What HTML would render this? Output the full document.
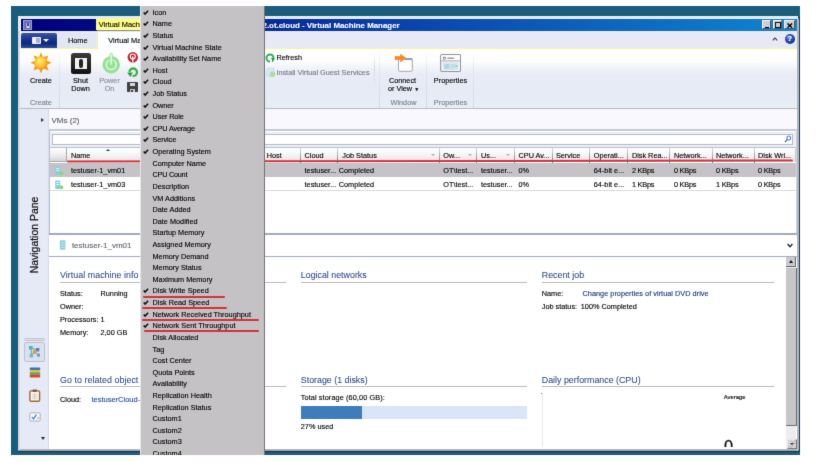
<!DOCTYPE html>
<html lang="en"><head><meta charset="utf-8"><title>Virtual Machine Manager</title>
<style>
html,body{margin:0;padding:0;background:#fff;}
body{width:820px;height:463px;position:relative;overflow:hidden;font-family:"Liberation Sans",sans-serif;font-size:7.3px;color:#000;}
.a{position:absolute;}
.t{position:absolute;white-space:nowrap;line-height:10px;-webkit-text-stroke:0.12px;}
</style></head><body>
<svg width="0" height="0" style="position:absolute"><filter id="soft" x="0" y="0" width="100%" height="100%" color-interpolation-filters="sRGB"><feConvolveMatrix order="3 3" kernelMatrix="0.0081 0.0819 0.0081 0.0819 0.64 0.0819 0.0081 0.0819 0.0081" divisor="1" preserveAlpha="false" edgeMode="duplicate"/></filter></svg>
<div id="app" style="position:absolute;left:0;top:0;width:820px;height:463px;background:#fff;filter:url(#soft);">
<div class="a" style="left:11px;top:6px;width:789px;height:449px;background:#1a5c7b;"></div>
<div class="a" style="left:18px;top:16px;width:780px;height:435px;background:#e9eaef;"></div>
<div class="a" style="left:798.6px;top:16px;width:1.4px;height:436px;background:#1a3a52;"></div>
<div class="a" style="left:796.6px;top:19px;width:2px;height:431px;background:#b4b7bc;"></div>
<div class="a" style="left:20px;top:19px;width:777px;height:431px;background:#fff;"></div>
<div class="a" style="left:20.6px;top:19px;width:776px;height:12px;background:linear-gradient(90deg,#00007c 0%,#01087f 8%,#0a44ac 50%,#1084d0 100%);"></div>
<div class="a" style="left:22.6px;top:20.2px;width:9.8px;height:9.8px;background:#6a70b0;border:0.6px solid #9a9fd4;box-sizing:border-box;"><div class="a" style="left:2.3px;top:1.6px;width:4.2px;height:5.6px;background:#4a4f98;border:0.7px solid #a8acd8;border-top:none;border-radius:0 0 1.6px 1.6px;box-sizing:border-box;"></div><div class="a" style="left:3.6px;top:5px;width:1.6px;height:1.4px;background:#d8daf0;"></div></div>
<div class="a" style="left:95.8px;top:19px;width:110px;height:11.4px;background:linear-gradient(180deg,#fefe70 0%,#fefe80 50%,#fefeb0 100%);"></div>
<div class="a" style="left:96.5px;top:30.2px;width:110px;height:1.8px;background:#92924e;"></div>
<div class="a" style="left:97px;top:32px;width:110px;height:1.3px;background:#f6f6c4;"></div>
<div class="t" style="left:98.7px;top:20px;font-size:7.45px;color:#000;">Virtual Machine</div>
<div class="t" style="right:420.4px;top:21px;font-size:7.9px;color:#fff;font-weight:700;">2.ot.cloud - Virtual Machine Manager</div>
<div class="a" style="left:762px;top:20.4px;width:9.2px;height:8.9px;background:#d0d0d3;border-right:1px solid #55585e;border-bottom:1px solid #55585e;border-top:0.6px solid #f4f4f4;border-left:0.6px solid #f4f4f4;box-sizing:border-box;"><div class="a" style="left:2.2px;top:5.2px;width:4.2px;height:1.7px;background:#000;"></div></div>
<div class="a" style="left:772.8px;top:20.4px;width:9.2px;height:8.9px;background:#d0d0d3;border-right:1px solid #55585e;border-bottom:1px solid #55585e;border-top:0.6px solid #f4f4f4;border-left:0.6px solid #f4f4f4;box-sizing:border-box;"><div class="a" style="left:1.4px;top:0.8px;width:6px;height:6px;border:0.9px solid #111;border-top-width:1.7px;box-sizing:border-box;"></div></div>
<div class="a" style="left:784.2px;top:20.4px;width:10.5px;height:8.9px;background:#d0d0d3;border-right:1px solid #55585e;border-bottom:1px solid #55585e;border-top:0.6px solid #f4f4f4;border-left:0.6px solid #f4f4f4;box-sizing:border-box;"><svg class="a" style="left:2.3px;top:1.5px" width="5.6" height="5.2" viewBox="0 0 5.6 5.2"><path d="M0.5 0.5L5.1 4.7M5.1 0.5L0.5 4.7" stroke="#000" stroke-width="1.45"/></svg></div>
<div class="a" style="left:20px;top:31px;width:777px;height:17px;background:#e7eaf6;"></div>
<div class="a" style="left:20.6px;top:33.1px;width:36.9px;height:14.5px;background:linear-gradient(180deg,#3a55a4 0%,#16338a 45%,#0c2a80 70%,#2c4ca2 100%);border-radius:2px 2px 0 0;"><div class="a" style="left:11.3px;top:3.8px;width:9.4px;height:7.2px;background:#eef1fa;border-radius:1px;"></div><div class="a" style="left:15.2px;top:4.8px;width:4.2px;height:5.2px;background:#a8b2d0;"></div><div class="a" style="left:22.8px;top:5.9px;width:0;height:0;border-left:3.1px solid transparent;border-right:3.1px solid transparent;border-top:3.5px solid #fff;"></div></div>
<div class="a" style="left:57.5px;top:33px;width:38.5px;height:15px;background:#e3e7f4;"></div>
<div class="t" style="left:67.9px;top:36px;font-size:7.4px;color:#000;">Home</div>
<div class="a" style="left:96.6px;top:32px;width:110px;height:17px;background:#fdfeff;border-left:1px solid #f3f1a0;box-sizing:border-box;"></div>
<div class="t" style="left:108.2px;top:36px;font-size:7.4px;color:#000;">Virtual Machine</div>
<div class="a" style="left:20px;top:47.5px;width:77px;height:1.6px;background:#f7f594;"></div>
<div class="a" style="left:206px;top:47.5px;width:590.5px;height:1.6px;background:#f7f594;"></div>
<svg class="a" style="left:771.8px;top:37.3px" width="6" height="4" viewBox="0 0 6 4"><path d="M0.8 3.4L3 1L5.2 3.4" fill="none" stroke="#333" stroke-width="1.1"/></svg>
<div class="a" style="left:784.6px;top:33.9px;width:10.1px;height:10.1px;border-radius:50%;background:radial-gradient(circle at 40% 35%,#5b7fd6 0%,#1a3a9c 60%,#0c2470 100%);"></div>
<div class="t" style="left:784.6px;top:34px;font-size:8px;color:#fff;font-weight:700;width:10px;text-align:center;">?</div>
<div class="a" style="left:20px;top:48.5px;width:777px;height:60px;background:linear-gradient(180deg,#ffffff 0%,#fdfdff 20%,#f2f4fa 31%,#e9ecf6 42%,#e6eaf5 70%,#e8eef6 100%);"></div>
<div class="a" style="left:20px;top:107.9px;width:777px;height:2.2px;background:linear-gradient(180deg,#b3b7c1,#c3c7d0);"></div>
<div class="a" style="left:58.8px;top:51px;width:1px;height:57px;background:linear-gradient(180deg,rgba(200,205,220,0) 0%,#e2e5ee 35%,#d3d7e1 100%);"></div>
<div class="a" style="left:378.5px;top:51px;width:1px;height:57px;background:linear-gradient(180deg,rgba(200,205,220,0) 0%,#e2e5ee 35%,#d3d7e1 100%);"></div>
<div class="a" style="left:425.5px;top:51px;width:1px;height:57px;background:linear-gradient(180deg,rgba(200,205,220,0) 0%,#e2e5ee 35%,#d3d7e1 100%);"></div>
<div class="a" style="left:472.8px;top:51px;width:1px;height:57px;background:linear-gradient(180deg,rgba(200,205,220,0) 0%,#e2e5ee 35%,#d3d7e1 100%);"></div>
<div class="a" style="left:373.5px;top:52px;width:1px;height:36px;background:linear-gradient(180deg,rgba(210,214,226,0) 0%,#d6d9e6 50%,rgba(210,214,226,0) 100%);"></div>
<svg class="a" style="left:29.6px;top:52px" width="22" height="22" viewBox="0 0 22 22">
<defs><radialGradient id="sun" cx="42%" cy="38%" r="62%"><stop offset="0" stop-color="#fff07a"/><stop offset="0.45" stop-color="#ffd23a"/><stop offset="0.8" stop-color="#fbae22"/><stop offset="1" stop-color="#f3901a"/></radialGradient></defs>
<polygon points="11,0.2 13,5.2 18.3,3.4 16.6,8.6 21.6,10.8 16.7,13 18.5,18.4 13.1,16.6 11,21.6 8.9,16.6 3.5,18.4 5.3,13 0.4,10.8 5.4,8.6 3.7,3.4 9,5.2" fill="#f59a1c"/>
<circle cx="11" cy="10.9" r="6.6" fill="url(#sun)"/></svg>
<div class="t" style="left:30px;top:76px;color:#000;">Create</div>
<div class="t" style="left:30px;top:98px;color:#7c808a;">Create</div>
<div class="a" style="left:70.5px;top:53px;width:20.5px;height:20.5px;background:linear-gradient(180deg,#3a3a3a,#111);border-radius:2.5px;"><div class="a" style="left:4.5px;top:4.5px;width:11.5px;height:11.5px;background:#f4f4f4;"></div><div class="a" style="left:8.3px;top:6px;width:4px;height:8.5px;background:#222;border-radius:2px;"></div></div>
<div class="t" style="left:60px;top:76px;color:#000;width:41px;text-align:center;">Shut</div>
<div class="t" style="left:60px;top:84px;color:#000;width:41px;text-align:center;">Down</div>
<svg class="a" style="left:100.5px;top:52px" width="21" height="23" viewBox="0 0 21 23">
<circle cx="10.2" cy="12.7" r="8.7" fill="#93e093"/><circle cx="10.2" cy="12.7" r="4.9" fill="none" stroke="#d9f7d9" stroke-width="1.7"/>
<rect x="8.9" y="1.2" width="2.6" height="12.3" rx="1.3" fill="#b9efb9" stroke="#93e093" stroke-width="0.7"/><rect x="9.6" y="2" width="1.2" height="10.5" rx="0.6" fill="#e6fbe6"/></svg>
<div class="t" style="left:89px;top:76px;color:#878c96;width:41px;text-align:center;">Power</div>
<div class="t" style="left:89px;top:84px;color:#878c96;width:41px;text-align:center;">On</div>
<svg class="a" style="left:127.3px;top:52.2px" width="12" height="11" viewBox="0 0 12 11"><circle cx="5.8" cy="5.3" r="5.2" fill="#c02630"/><circle cx="5.8" cy="4.5" r="2.5" fill="none" stroke="#fff" stroke-width="1.15"/><rect x="5.15" y="4.4" width="1.3" height="5.4" fill="#fff"/></svg>
<svg class="a" style="left:127.3px;top:67.3px" width="12" height="11" viewBox="0 0 12 11"><circle cx="6.2" cy="5.2" r="3.7" fill="#f2fbf2" stroke="#35b048" stroke-width="2.3"/><rect x="0" y="5.2" width="5.6" height="5.8" fill="#eef1f8"/><path d="M0.2 5.6L5.8 5.4L3.4 10.2Z" fill="#27a03c"/></svg>
<div class="a" style="left:127.4px;top:82.3px;width:10.2px;height:10px;background:#414141;border-radius:0.8px;"><div class="a" style="left:2.3px;top:0.6px;width:5.6px;height:3.6px;background:#dcdcdc;"></div><div class="a" style="left:3px;top:6.6px;width:4.2px;height:3.4px;background:#c4c4c4;"></div><div class="a" style="left:4px;top:7.3px;width:1.3px;height:2.2px;background:#444;"></div></div>
<svg class="a" style="left:265.2px;top:53.3px" width="10" height="10" viewBox="0 0 10 10"><circle cx="5" cy="5" r="3.5" fill="none" stroke="#2fae49" stroke-width="1.9"/><path d="M5.4 5.2L9.8 5.2L7.6 8.8Z" fill="#1e9a3a"/><rect x="5" y="6" width="2" height="4" fill="#f8f9fc"/></svg>
<div class="t" style="left:276.4px;top:53px;color:#000;">Refresh</div>
<svg class="a" style="left:265.5px;top:67px" width="10" height="11" viewBox="0 0 10 11"><rect x="1" y="1" width="7" height="8" rx="1" fill="#d9e9f0" stroke="#b8d4e0" stroke-width="0.6"/><circle cx="6.5" cy="7.3" r="2.8" fill="#a6e0a6"/></svg>
<div class="t" style="left:276.4px;top:68px;color:#757a86;">Install Virtual Guest Services</div>
<svg class="a" style="left:393px;top:52px" width="22" height="22" viewBox="0 0 22 22">
<rect x="5.5" y="6.7" width="13.8" height="12.6" rx="1" fill="#fdfdfd" stroke="#9c9ea4" stroke-width="0.9"/>
<rect x="11.5" y="6.5" width="7.6" height="1.3" fill="#7e848c"/>
<path d="M2 4.5L7.5 4.5L7.5 2.2L12.8 6L7.5 9.9L7.5 7.6L2 7.6Z" fill="#f68b1f" stroke="#e57a12" stroke-width="0.5"/></svg>
<div class="t" style="left:380px;top:76px;color:#000;width:45px;text-align:center;">Connect</div>
<div class="t" style="left:380px;top:84px;color:#000;width:47px;text-align:center;">or View <span style="font-size:5px;position:relative;top:-0.5px">&#9660;</span></div>
<div class="t" style="left:380px;top:98px;color:#7c808a;width:47px;text-align:center;">Window</div>
<svg class="a" style="left:439.7px;top:54px" width="21.4" height="18.4" viewBox="0 0 22 19">
<rect x="0.6" y="0.6" width="20.6" height="17.4" rx="1.3" fill="#f3f6f8" stroke="#8f9296" stroke-width="1.1"/>
<rect x="1.3" y="1.3" width="19.2" height="5.2" fill="#fff"/>
<rect x="3.5" y="3.3" width="2" height="2" fill="none" stroke="#555" stroke-width="0.6"/><rect x="7.5" y="3.8" width="7" height="1" fill="#666"/>
<rect x="1.3" y="6.8" width="19.2" height="0.8" fill="#8f9296"/>
<rect x="3" y="9" width="16" height="7.5" fill="#d5e6ee"/>
<rect x="4.5" y="10.3" width="5" height="5" fill="#b5d2de"/><rect x="11" y="10.3" width="4" height="5" fill="#c2dbe6"/><rect x="16" y="11.5" width="2" height="2" fill="#9ad08a"/></svg>
<div class="t" style="left:427px;top:76px;color:#000;width:47px;text-align:center;">Properties</div>
<div class="t" style="left:427px;top:98px;color:#7c808a;width:47px;text-align:center;">Properties</div>
<div class="a" style="left:20px;top:109px;width:28.7px;height:341px;background:#e6e9f6;border-right:1px solid #d6daea;box-sizing:border-box;"></div>
<div class="t" style="left:35px;top:235px;font-size:10.45px;color:#111;line-height:12px;-webkit-text-stroke:0.22px;transform:translate(-50%,-50%) rotate(-90deg);transform-origin:center;">Navigation Pane</div>
<div class="a" style="left:24.2px;top:337.5px;width:20.4px;height:3.6px;background:#d9dbe5;border:0.7px solid #c4c8d4;border-radius:1.5px;box-sizing:border-box;"></div>
<div class="a" style="left:24.2px;top:342.3px;width:20.4px;height:19.5px;background:#dee1eb;border:0.8px solid #bcc1d2;border-radius:2px;box-sizing:border-box;"></div>
<svg class="a" style="left:28px;top:345px" width="13" height="14" viewBox="0 0 13 14"><path d="M3 3L9.5 5M3.5 10.5L9.5 5M3 3L3.5 10.5M6.5 6.8L10.5 10" stroke="#5a9ac0" stroke-width="0.9" fill="none"/><rect x="1" y="1" width="3.6" height="3.6" fill="#4fb0c6"/><rect x="8" y="3" width="3.4" height="3.4" fill="#4a86c0"/><rect x="1.6" y="8.6" width="3.6" height="3.8" fill="#62bcd0"/><rect x="9" y="8.6" width="3" height="3" fill="#5aa0c8"/><circle cx="6.6" cy="6.9" r="2" fill="#e8963a"/></svg>
<svg class="a" style="left:28.6px;top:367.3px" width="12" height="11" viewBox="0 0 12 11"><rect x="0.8" y="0.4" width="10.4" height="2.6" rx="0.8" fill="#3f6fb5"/><rect x="0.8" y="3" width="10.4" height="2.4" rx="0.5" fill="#d6c64a"/><rect x="0.8" y="5.3" width="10.4" height="2.4" rx="0.5" fill="#6aa84e"/><rect x="0.8" y="7.6" width="10.4" height="3" rx="0.8" fill="#d2463a"/></svg>
<svg class="a" style="left:29.2px;top:388.6px" width="11.5" height="13" viewBox="0 0 11.5 13"><rect x="0.9" y="1.9" width="9.7" height="10.3" rx="1.2" fill="#fbf9f4" stroke="#9a683c" stroke-width="1.4"/><rect x="3.6" y="0.5" width="4.3" height="2.5" rx="0.6" fill="#7e5a3c"/><path d="M3 5.3H8.6M3 7.3H8.6M3 9.3H8.6M5.8 4.4V10.4" stroke="#b9b4ac" stroke-width="0.6"/></svg>
<svg class="a" style="left:28.6px;top:411.6px" width="12" height="10" viewBox="0 0 12 10"><rect x="0.8" y="0.8" width="10.4" height="8.2" rx="1" fill="#f4f6fa" stroke="#a8acb8" stroke-width="0.9"/><path d="M2.8 5L4.5 6.9L7.4 2.6" fill="none" stroke="#2a7ac0" stroke-width="1.1"/><rect x="7.8" y="5.6" width="2.4" height="0.8" fill="#d07070"/></svg>
<div class="a" style="left:40.9px;top:436.6px;width:0px;height:0px;border-left:2.4px solid transparent;border-right:2.4px solid transparent;border-top:3px solid #2a2a2a;"></div>
<div class="a" style="left:48.7px;top:109px;width:748.3px;height:21.5px;background:#f8f8fe;"></div>
<div class="a" style="left:41.2px;top:118.1px;width:0px;height:0px;border-top:2.5px solid transparent;border-bottom:2.5px solid transparent;border-left:3.2px solid #3a3a3a;"></div>
<div class="t" style="left:51.5px;top:116px;font-size:8px;color:#5a5d66;">VMs (2)</div>
<div class="a" style="left:48.7px;top:129.2px;width:748.3px;height:2.3px;background:#c4ccd9;"></div>
<div class="a" style="left:48.7px;top:131.5px;width:748.3px;height:15.7px;background:#eceff6;"></div>
<div class="a" style="left:52.3px;top:133.5px;width:741px;height:11.3px;background:#fff;border:1px solid #b3bbc9;box-sizing:border-box;"></div>
<svg class="a" style="left:783.5px;top:135.3px" width="8" height="8" viewBox="0 0 8 8"><circle cx="4.8" cy="3" r="2" fill="none" stroke="#3a6ab0" stroke-width="1"/><path d="M3.3 4.5L1 7" stroke="#3a6ab0" stroke-width="1.2"/></svg>
<div class="a" style="left:48.7px;top:147px;width:747.3px;height:14.5px;background:linear-gradient(180deg,#ffffff 0%,#f6f6f8 45%,#e3e3e6 100%);border-top:1px solid #b9bec9;box-sizing:border-box;"></div>
<div class="a" style="left:49.5px;top:147.5px;width:17px;height:14px;background:linear-gradient(180deg,#ffffff 0%,#f0f0f2 50%,#d5d5d8 100%);border-right:1px solid #a9a9ad;border-bottom:1px solid #a9a9ad;box-sizing:border-box;"></div>
<div class="t" style="left:70.9px;top:151px;color:#000;">Name</div>
<div class="t" style="left:266.8px;top:151px;color:#000;">Host</div>
<div class="t" style="left:304.6px;top:151px;color:#000;">Cloud</div>
<div class="t" style="left:342.3px;top:151px;color:#000;">Job Status</div>
<div class="t" style="left:443.3px;top:151px;color:#000;">Ow...</div>
<div class="t" style="left:481px;top:151px;color:#000;">Us...</div>
<div class="t" style="left:518.5px;top:151px;color:#000;">CPU Av...</div>
<div class="t" style="left:555.9px;top:151px;color:#000;">Service</div>
<div class="t" style="left:593.8px;top:151px;color:#000;">Operati...</div>
<div class="t" style="left:631.9px;top:151px;color:#000;">Disk Rea...</div>
<div class="t" style="left:673.9px;top:151px;color:#000;">Network...</div>
<div class="t" style="left:716px;top:151px;color:#000;">Network...</div>
<div class="t" style="left:758px;top:151px;color:#000;">Disk Wri...</div>
<div class="a" style="left:795px;top:147px;width:1.5px;height:14.5px;background:#c8cad0;"></div>
<div class="a" style="left:106.4px;top:148.6px;width:0px;height:0px;border-left:2.2px solid transparent;border-right:2.2px solid transparent;border-bottom:2.3px solid #2a3a3a;"></div>
<div class="a" style="left:430.5px;top:154px;width:0px;height:0px;border-left:2px solid transparent;border-right:2px solid transparent;border-top:2.4px solid #aaadb5;"></div>
<div class="a" style="left:468px;top:154px;width:0px;height:0px;border-left:2px solid transparent;border-right:2px solid transparent;border-top:2.4px solid #aaadb5;"></div>
<div class="a" style="left:505.5px;top:154px;width:0px;height:0px;border-left:2px solid transparent;border-right:2px solid transparent;border-top:2.4px solid #aaadb5;"></div>
<div class="a" style="left:49.5px;top:162.5px;width:746.5px;height:14.3px;background:#c5c3c6;"></div>
<div class="a" style="left:49.5px;top:176.8px;width:746.5px;height:14.4px;background:#fff;border-bottom:1px solid #d6d7dc;box-sizing:border-box;"></div>
<div class="a" style="left:49.5px;top:190.3px;width:746.5px;height:43px;background:#fff;"></div>
<div class="a" style="left:48.7px;top:130px;width:1px;height:104px;background:#b9c2d4;"></div>
<div class="a" style="left:795.7px;top:130px;width:1px;height:104px;background:#cfd4e0;"></div>
<svg class="a" style="left:53.5px;top:165.6px" width="11" height="10" viewBox="0 0 11 10"><rect x="1.2" y="0.5" width="5" height="8.5" rx="0.8" fill="#86cfe0"/><rect x="2.2" y="2" width="3" height="1" fill="#e0f4f8"/><rect x="2.2" y="4" width="3" height="1" fill="#e0f4f8"/><circle cx="7.4" cy="7.3" r="1.9" fill="#8fd46e"/></svg>
<div class="t" style="left:70.9px;top:166px;color:#000;">testuser-1_vm01</div>
<div class="t" style="left:304.6px;top:166px;color:#000;">testuser...</div>
<div class="t" style="left:338.8px;top:166px;color:#000;">Completed</div>
<div class="t" style="left:443.3px;top:166px;color:#000;">OT\test...</div>
<div class="t" style="left:481px;top:166px;color:#000;">testuser...</div>
<div class="t" style="left:518.5px;top:166px;color:#000;">0%</div>
<div class="t" style="left:593.8px;top:166px;color:#000;">64-bit e...</div>
<div class="t" style="left:631.9px;top:166px;color:#000;letter-spacing:-0.2px;">2 KBps</div>
<div class="t" style="left:673.9px;top:166px;color:#000;letter-spacing:-0.2px;">0 KBps</div>
<div class="t" style="left:716px;top:166px;color:#000;letter-spacing:-0.2px;">0 KBps</div>
<div class="t" style="left:758px;top:166px;color:#000;letter-spacing:-0.2px;">0 KBps</div>
<svg class="a" style="left:53.5px;top:180.0px" width="11" height="10" viewBox="0 0 11 10"><rect x="1.2" y="0.5" width="5" height="8.5" rx="0.8" fill="#86cfe0"/><rect x="2.2" y="2" width="3" height="1" fill="#e0f4f8"/><rect x="2.2" y="4" width="3" height="1" fill="#e0f4f8"/><circle cx="7.4" cy="7.3" r="1.9" fill="#8fd46e"/></svg>
<div class="t" style="left:70.9px;top:180px;color:#000;">testuser-1_vm03</div>
<div class="t" style="left:304.6px;top:180px;color:#000;">testuser...</div>
<div class="t" style="left:338.8px;top:180px;color:#000;">Completed</div>
<div class="t" style="left:443.3px;top:180px;color:#000;">OT\test...</div>
<div class="t" style="left:481px;top:180px;color:#000;">testuser...</div>
<div class="t" style="left:518.5px;top:180px;color:#000;">0%</div>
<div class="t" style="left:593.8px;top:180px;color:#000;">64-bit e...</div>
<div class="t" style="left:631.9px;top:180px;color:#000;letter-spacing:-0.2px;">1 KBps</div>
<div class="t" style="left:673.9px;top:180px;color:#000;letter-spacing:-0.2px;">0 KBps</div>
<div class="t" style="left:716px;top:180px;color:#000;letter-spacing:-0.2px;">1 KBps</div>
<div class="t" style="left:758px;top:180px;color:#000;letter-spacing:-0.2px;">0 KBps</div>
<div class="a" style="left:67.3px;top:159.8px;width:725.8px;height:2.1px;background:#d92f3c;border-radius:1px;transform:rotate(-0.072deg);"></div>
<div class="a" style="left:299.5px;top:148.3px;width:1px;height:14.5px;background:linear-gradient(180deg,rgba(150,152,160,0.35) 0%,rgba(120,122,130,0.75) 70%,rgba(90,92,100,0.8) 100%);"></div>
<div class="a" style="left:337.0px;top:148.3px;width:1px;height:14.5px;background:linear-gradient(180deg,rgba(150,152,160,0.35) 0%,rgba(120,122,130,0.75) 70%,rgba(90,92,100,0.8) 100%);"></div>
<div class="a" style="left:439.0px;top:148.3px;width:1px;height:14.5px;background:linear-gradient(180deg,rgba(150,152,160,0.35) 0%,rgba(120,122,130,0.75) 70%,rgba(90,92,100,0.8) 100%);"></div>
<div class="a" style="left:476.3px;top:148.3px;width:1px;height:14.5px;background:linear-gradient(180deg,rgba(150,152,160,0.35) 0%,rgba(120,122,130,0.75) 70%,rgba(90,92,100,0.8) 100%);"></div>
<div class="a" style="left:514.0px;top:148.3px;width:1px;height:14.5px;background:linear-gradient(180deg,rgba(150,152,160,0.35) 0%,rgba(120,122,130,0.75) 70%,rgba(90,92,100,0.8) 100%);"></div>
<div class="a" style="left:551.5px;top:148.3px;width:1px;height:14.5px;background:linear-gradient(180deg,rgba(150,152,160,0.35) 0%,rgba(120,122,130,0.75) 70%,rgba(90,92,100,0.8) 100%);"></div>
<div class="a" style="left:589.0px;top:148.3px;width:1px;height:14.5px;background:linear-gradient(180deg,rgba(150,152,160,0.35) 0%,rgba(120,122,130,0.75) 70%,rgba(90,92,100,0.8) 100%);"></div>
<div class="a" style="left:627.3px;top:148.3px;width:1px;height:14.5px;background:linear-gradient(180deg,rgba(150,152,160,0.35) 0%,rgba(120,122,130,0.75) 70%,rgba(90,92,100,0.8) 100%);"></div>
<div class="a" style="left:669.2px;top:148.3px;width:1px;height:14.5px;background:linear-gradient(180deg,rgba(150,152,160,0.35) 0%,rgba(120,122,130,0.75) 70%,rgba(90,92,100,0.8) 100%);"></div>
<div class="a" style="left:711.7px;top:148.3px;width:1px;height:14.5px;background:linear-gradient(180deg,rgba(150,152,160,0.35) 0%,rgba(120,122,130,0.75) 70%,rgba(90,92,100,0.8) 100%);"></div>
<div class="a" style="left:753.7px;top:148.3px;width:1px;height:14.5px;background:linear-gradient(180deg,rgba(150,152,160,0.35) 0%,rgba(120,122,130,0.75) 70%,rgba(90,92,100,0.8) 100%);"></div>
<div class="a" style="left:49.5px;top:190.4px;width:746.5px;height:1px;background:#dadbdf;"></div>
<div class="a" style="left:48.7px;top:233px;width:748.3px;height:1.6px;background:#a0aabc;"></div>
<div class="a" style="left:48.7px;top:234.6px;width:748.3px;height:21.2px;background:#fff;"></div>
<svg class="a" style="left:58.5px;top:240.3px" width="7" height="10" viewBox="0 0 7 10"><rect x="0.8" y="0.3" width="5.6" height="9.4" rx="0.9" fill="#8fd0de"/><rect x="1.9" y="2.2" width="3.4" height="0.9" fill="#c4e8ef"/><rect x="1.9" y="4.5" width="3.4" height="0.9" fill="#c4e8ef"/><rect x="1.9" y="6.8" width="3.4" height="0.9" fill="#c4e8ef"/></svg>
<div class="t" style="left:71.9px;top:241px;font-size:8px;color:#60646c;">testuser-1_vm01</div>
<svg class="a" style="left:787.2px;top:242.8px" width="6" height="5" viewBox="0 0 6 5"><path d="M0.6 1L3 3.7L5.4 1" fill="none" stroke="#222" stroke-width="1.35"/></svg>
<div class="a" style="left:48.7px;top:255.6px;width:748.3px;height:1.5px;background:#a0aabc;"></div>
<div class="t" style="left:60px;top:270px;font-size:8.85px;color:#2a4986;-webkit-text-stroke:0.05px;letter-spacing:0.05px;">Virtual machine info</div>
<div class="a" style="left:60px;top:281.5px;width:225.5px;height:1.3px;background:#b9b9bd;"></div>
<div class="t" style="left:300.8px;top:270px;font-size:8.85px;color:#2a4986;-webkit-text-stroke:0.05px;letter-spacing:0px;">Logical networks</div>
<div class="a" style="left:300.8px;top:281.5px;width:226.2px;height:1.3px;background:#b9b9bd;"></div>
<div class="t" style="left:541.8px;top:270px;font-size:8.85px;color:#2a4986;-webkit-text-stroke:0.05px;letter-spacing:0px;">Recent job</div>
<div class="a" style="left:541.8px;top:281.5px;width:232.0px;height:1.3px;background:#b9b9bd;"></div>
<div class="t" style="left:60px;top:375px;font-size:8.85px;color:#2a4986;-webkit-text-stroke:0.05px;letter-spacing:0.06px;">Go to related object</div>
<div class="a" style="left:60px;top:386.0px;width:225.5px;height:1.3px;background:#b9b9bd;"></div>
<div class="t" style="left:300.8px;top:375px;font-size:8.85px;color:#2a4986;-webkit-text-stroke:0.05px;letter-spacing:0px;">Storage (1 disks)</div>
<div class="a" style="left:300.8px;top:386.0px;width:226.2px;height:1.3px;background:#b9b9bd;"></div>
<div class="t" style="left:541.8px;top:375px;font-size:8.85px;color:#2a4986;-webkit-text-stroke:0.05px;letter-spacing:0px;">Daily performance (CPU)</div>
<div class="a" style="left:541.8px;top:386.0px;width:232.0px;height:1.3px;background:#b9b9bd;"></div>
<div class="t" style="left:60px;top:289px;">Status:</div>
<div class="t" style="left:100.5px;top:289px;">Running</div>
<div class="t" style="left:60px;top:302px;">Owner:</div>
<div class="t" style="left:60px;top:315px;">Processors: 1</div>
<div class="t" style="left:60px;top:328px;">Memory:</div>
<div class="t" style="left:100.5px;top:328px;">2,00 GB</div>
<div class="t" style="left:60px;top:395px;">Cloud:</div>
<div class="t" style="left:91.4px;top:395px;font-size:7.5px;color:#2a4f9c;">testuserCloud-</div>
<div class="t" style="left:541.8px;top:289px;">Name:</div>
<div class="t" style="left:582.5px;top:289px;color:#1f3478;letter-spacing:0.03px;">Change properties of virtual DVD drive</div>
<div class="t" style="left:541.8px;top:302px;">Job status:</div>
<div class="t" style="left:580.8px;top:302px;">100% Completed</div>
<div class="t" style="left:300.8px;top:393px;letter-spacing:0.1px;">Total storage (60,00 GB):</div>
<div class="a" style="left:300.8px;top:405.5px;width:226.4px;height:13.2px;background:#dbe5f8;"></div>
<div class="a" style="left:300.8px;top:405.5px;width:61px;height:13.2px;background:#3f7cbc;"></div>
<div class="t" style="left:300.8px;top:422px;">27% used</div>
<div class="a" style="left:541.6px;top:393px;width:0.8px;height:53.5px;background:#e6e8ee;"></div>
<div class="a" style="left:541.3px;top:392.6px;width:1.2px;height:1.2px;background:#777;"></div>
<div class="t" style="left:723.8px;top:392px;font-size:5.9px;color:#000;">Average</div>
<div class="a" style="left:715px;top:430px;width:30px;height:16.6px;overflow:hidden;"><div class="t" style="left:9px;top:6px;font-size:16.4px;line-height:20px;color:#111;-webkit-text-stroke:0.3px #111;">0</div></div>
<div class="a" style="left:786.3px;top:257.2px;width:10px;height:192.2px;background:#ededef;"></div>
<div class="a" style="left:786.3px;top:267.5px;width:10.4px;height:158.5px;background:#c6c5c8;border-right:1px solid #6e6e74;border-bottom:1.2px solid #6e6e74;box-sizing:border-box;"></div>
<div class="a" style="left:786.3px;top:257.4px;width:10.2px;height:10px;background:#cbcace;border-right:1px solid #66666c;border-bottom:1.2px solid #66666c;box-sizing:border-box;"><div class="a" style="left:2.3px;top:3px;width:0;height:0;border-left:2.5px solid transparent;border-right:2.5px solid transparent;border-bottom:3px solid #111;"></div></div>
<div class="a" style="left:786.5px;top:438.8px;width:10.2px;height:10.4px;background:repeating-linear-gradient(135deg,#c4c4c8 0,#c4c4c8 1.1px,#dededf 1.1px,#dededf 2.3px);border-right:1px solid #77777c;border-bottom:1px solid #77777c;border-left:0.6px solid #e9e9eb;border-top:0.6px solid #e9e9eb;box-sizing:border-box;"><div class="a" style="left:2.2px;top:3.6px;width:0;height:0;border-left:2.2px solid transparent;border-right:2.2px solid transparent;border-top:2.6px solid #333;"></div></div>
<div class="a" style="left:18px;top:449.1px;width:779px;height:1.5px;background:linear-gradient(180deg,#c9c9cd,#909296);"></div>
<div class="a" style="left:17.6px;top:450.5px;width:782.4px;height:1.4px;background:#203549;"></div>
<div class="a" style="left:17.8px;top:31px;width:2.3px;height:418.5px;background:linear-gradient(90deg,#cfd0d4,#e2e3e8);"></div>
<div class="a" style="left:139.8px;top:5.8px;width:125.6px;height:449.1px;background:#c4c2c5;border-right:1.8px solid #737378;border-left:1.3px solid #e6e6e8;box-sizing:border-box;overflow:hidden;"></div>
<div class="t" style="left:152.5px;top:8px;color:#000;">Icon</div>
<svg class="a" style="left:143.3px;top:9.50px" width="5.8" height="5.2" viewBox="0 0 5.8 5.2"><path d="M0.7 2.5L2.1 4.1L5.1 0.8" fill="none" stroke="#0c0c0c" stroke-width="1.5"/></svg>
<div class="t" style="left:152.5px;top:19px;color:#000;">Name</div>
<svg class="a" style="left:143.3px;top:20.50px" width="5.8" height="5.2" viewBox="0 0 5.8 5.2"><path d="M0.7 2.5L2.1 4.1L5.1 0.8" fill="none" stroke="#0c0c0c" stroke-width="1.5"/></svg>
<div class="t" style="left:152.5px;top:31px;color:#000;">Status</div>
<svg class="a" style="left:143.3px;top:32.50px" width="5.8" height="5.2" viewBox="0 0 5.8 5.2"><path d="M0.7 2.5L2.1 4.1L5.1 0.8" fill="none" stroke="#0c0c0c" stroke-width="1.5"/></svg>
<div class="t" style="left:152.5px;top:43px;color:#000;">Virtual Machine State</div>
<svg class="a" style="left:143.3px;top:44.50px" width="5.8" height="5.2" viewBox="0 0 5.8 5.2"><path d="M0.7 2.5L2.1 4.1L5.1 0.8" fill="none" stroke="#0c0c0c" stroke-width="1.5"/></svg>
<div class="t" style="left:152.5px;top:54px;color:#000;">Availability Set Name</div>
<svg class="a" style="left:143.3px;top:55.50px" width="5.8" height="5.2" viewBox="0 0 5.8 5.2"><path d="M0.7 2.5L2.1 4.1L5.1 0.8" fill="none" stroke="#0c0c0c" stroke-width="1.5"/></svg>
<div class="t" style="left:152.5px;top:66px;color:#000;">Host</div>
<svg class="a" style="left:143.3px;top:67.50px" width="5.8" height="5.2" viewBox="0 0 5.8 5.2"><path d="M0.7 2.5L2.1 4.1L5.1 0.8" fill="none" stroke="#0c0c0c" stroke-width="1.5"/></svg>
<div class="t" style="left:152.5px;top:77px;color:#000;">Cloud</div>
<svg class="a" style="left:143.3px;top:78.50px" width="5.8" height="5.2" viewBox="0 0 5.8 5.2"><path d="M0.7 2.5L2.1 4.1L5.1 0.8" fill="none" stroke="#0c0c0c" stroke-width="1.5"/></svg>
<div class="t" style="left:152.5px;top:89px;color:#000;">Job Status</div>
<svg class="a" style="left:143.3px;top:90.50px" width="5.8" height="5.2" viewBox="0 0 5.8 5.2"><path d="M0.7 2.5L2.1 4.1L5.1 0.8" fill="none" stroke="#0c0c0c" stroke-width="1.5"/></svg>
<div class="t" style="left:152.5px;top:101px;color:#000;letter-spacing:-0.1px;">Owner</div>
<svg class="a" style="left:143.3px;top:102.50px" width="5.8" height="5.2" viewBox="0 0 5.8 5.2"><path d="M0.7 2.5L2.1 4.1L5.1 0.8" fill="none" stroke="#0c0c0c" stroke-width="1.5"/></svg>
<div class="t" style="left:152.5px;top:112px;color:#000;letter-spacing:-0.14px;">User Role</div>
<svg class="a" style="left:143.3px;top:113.50px" width="5.8" height="5.2" viewBox="0 0 5.8 5.2"><path d="M0.7 2.5L2.1 4.1L5.1 0.8" fill="none" stroke="#0c0c0c" stroke-width="1.5"/></svg>
<div class="t" style="left:152.5px;top:124px;color:#000;letter-spacing:-0.16px;">CPU Average</div>
<svg class="a" style="left:143.3px;top:125.50px" width="5.8" height="5.2" viewBox="0 0 5.8 5.2"><path d="M0.7 2.5L2.1 4.1L5.1 0.8" fill="none" stroke="#0c0c0c" stroke-width="1.5"/></svg>
<div class="t" style="left:152.5px;top:135px;color:#000;letter-spacing:-0.1px;">Service</div>
<svg class="a" style="left:143.3px;top:136.50px" width="5.8" height="5.2" viewBox="0 0 5.8 5.2"><path d="M0.7 2.5L2.1 4.1L5.1 0.8" fill="none" stroke="#0c0c0c" stroke-width="1.5"/></svg>
<div class="t" style="left:152.5px;top:147px;color:#000;">Operating System</div>
<svg class="a" style="left:143.3px;top:148.50px" width="5.8" height="5.2" viewBox="0 0 5.8 5.2"><path d="M0.7 2.5L2.1 4.1L5.1 0.8" fill="none" stroke="#0c0c0c" stroke-width="1.5"/></svg>
<div class="t" style="left:152.5px;top:159px;color:#000;">Computer Name</div>
<div class="t" style="left:152.5px;top:170px;color:#000;letter-spacing:-0.25px;">CPU Count</div>
<div class="t" style="left:152.5px;top:182px;color:#000;">Description</div>
<div class="t" style="left:152.5px;top:194px;color:#000;">VM Additions</div>
<div class="t" style="left:152.5px;top:205px;color:#000;">Date Added</div>
<div class="t" style="left:152.5px;top:217px;color:#000;">Date Modified</div>
<div class="t" style="left:152.5px;top:228px;color:#000;">Startup Memory</div>
<div class="t" style="left:152.5px;top:240px;color:#000;">Assigned Memory</div>
<div class="t" style="left:152.5px;top:252px;color:#000;">Memory Demand</div>
<div class="t" style="left:152.5px;top:263px;color:#000;">Memory Status</div>
<div class="t" style="left:152.5px;top:275px;color:#000;">Maximum Memory</div>
<div class="t" style="left:152.5px;top:286px;color:#000;">Disk Write Speed</div>
<svg class="a" style="left:143.3px;top:287.50px" width="5.8" height="5.2" viewBox="0 0 5.8 5.2"><path d="M0.7 2.5L2.1 4.1L5.1 0.8" fill="none" stroke="#0c0c0c" stroke-width="1.5"/></svg>
<div class="t" style="left:152.5px;top:298px;color:#000;">Disk Read Speed</div>
<svg class="a" style="left:143.3px;top:299.50px" width="5.8" height="5.2" viewBox="0 0 5.8 5.2"><path d="M0.7 2.5L2.1 4.1L5.1 0.8" fill="none" stroke="#0c0c0c" stroke-width="1.5"/></svg>
<div class="t" style="left:152.5px;top:310px;color:#000;">Network Received Throughput</div>
<svg class="a" style="left:143.3px;top:311.50px" width="5.8" height="5.2" viewBox="0 0 5.8 5.2"><path d="M0.7 2.5L2.1 4.1L5.1 0.8" fill="none" stroke="#0c0c0c" stroke-width="1.5"/></svg>
<div class="t" style="left:152.5px;top:321px;color:#000;">Network Sent Throughput</div>
<svg class="a" style="left:143.3px;top:322.50px" width="5.8" height="5.2" viewBox="0 0 5.8 5.2"><path d="M0.7 2.5L2.1 4.1L5.1 0.8" fill="none" stroke="#0c0c0c" stroke-width="1.5"/></svg>
<div class="t" style="left:152.5px;top:333px;color:#000;">Disk Allocated</div>
<div class="t" style="left:152.5px;top:345px;color:#000;">Tag</div>
<div class="t" style="left:152.5px;top:356px;color:#000;">Cost Center</div>
<div class="t" style="left:152.5px;top:368px;color:#000;">Quota Points</div>
<div class="t" style="left:152.5px;top:379px;color:#000;">Availability</div>
<div class="t" style="left:152.5px;top:391px;color:#000;">Replication Health</div>
<div class="t" style="left:152.5px;top:403px;color:#000;">Replication Status</div>
<div class="t" style="left:152.5px;top:414px;color:#000;">Custom1</div>
<div class="t" style="left:152.5px;top:426px;color:#000;">Custom2</div>
<div class="t" style="left:152.5px;top:437px;color:#000;">Custom3</div>
<div class="a" style="left:152.5px;top:449px;width:100px;height:5.90px;overflow:hidden;"><div class="t" style="left:0;top:0;color:#000">Custom4</div></div>
<div class="a" style="left:142.8px;top:296.1px;width:82.5px;height:2px;background:#d92f3c;border-radius:1px;"></div>
<div class="a" style="left:141.5px;top:307px;width:85.5px;height:2px;background:#d92f3c;border-radius:1px;"></div>
<div class="a" style="left:142px;top:318.5px;width:117.19999999999999px;height:2px;background:#d92f3c;border-radius:1px;"></div>
<div class="a" style="left:143.5px;top:330px;width:115.0px;height:2px;background:#d92f3c;border-radius:1px;"></div>
</div></body></html>
